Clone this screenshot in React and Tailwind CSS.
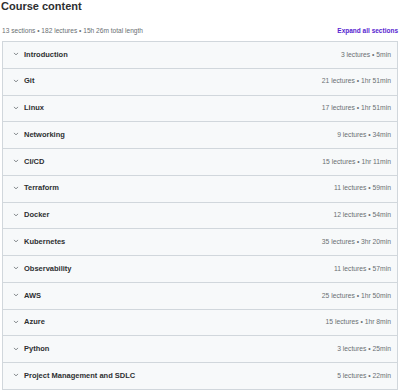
import React from 'react';

const sections = [
  { title: 'Introduction', lectures: 3, length: '5min' },
  { title: 'Git', lectures: 21, length: '1hr 51min' },
  { title: 'Linux', lectures: 17, length: '1hr 51min' },
  { title: 'Networking', lectures: 9, length: '34min' },
  { title: 'CI/CD', lectures: 15, length: '1hr 11min' },
  { title: 'Terraform', lectures: 11, length: '59min' },
  { title: 'Docker', lectures: 12, length: '54min' },
  { title: 'Kubernetes', lectures: 35, length: '3hr 20min' },
  { title: 'Observability', lectures: 11, length: '57min' },
  { title: 'AWS', lectures: 25, length: '1hr 50min' },
  { title: 'Azure', lectures: 15, length: '1hr 8min' },
  { title: 'Python', lectures: 3, length: '25min' },
  { title: 'Project Management and SDLC', lectures: 5, length: '22min' },
];

function Chevron() {
  return (
    <svg width="6" height="4" viewBox="0 0 6 4" className="shrink-0">
      <polyline points="1.2,1.2 3,2.8 4.8,1.2" fill="none" stroke="#7c8185" strokeWidth="0.9" strokeLinecap="round" strokeLinejoin="round" />
    </svg>
  );
}

export default function App() {
  return (
    <div className="w-[400px] h-[391px] bg-white overflow-hidden font-['Liberation_Sans',Arial,sans-serif] text-[#2d2f31]">
      <h2 className="pl-[1px] text-[11px] leading-[13px] font-bold">Course content</h2>

      <div className="mt-[14.3px] h-[8px] pl-[2px] pr-[2px] flex items-center justify-between">
        <span className="text-[6.6px] leading-[8px] text-[#6a6f73]">
          13 sections • 182 lectures • 15h 26m total length
        </span>
        <button className="text-[6.5px] leading-[8px] font-bold text-[#5624d0]">Expand all sections</button>
      </div>

      <div className="mt-[5.7px] ml-[2px] w-[396px] border border-[#d1d7dc]">
        {sections.map((s, i) => (
          <div
            key={s.title}
            className={
              i === 0
                ? 'h-[25.77px] bg-[#f7f9fa] flex items-center justify-between pl-[9.5px] pr-[6px] pb-[1.5px]'
                : 'h-[26.77px] border-t border-[#d1d7dc] bg-[#f7f9fa] flex items-center justify-between pl-[9.5px] pr-[6px] pb-[1.5px]'
            }
          >
            <div className="flex items-center gap-[5.5px]">
              <Chevron />
              <span className="text-[7.5px] font-bold leading-[9px]">{s.title}</span>
            </div>
            <span className="text-[6.75px] leading-[9px] text-[#6a6f73]">
              {s.lectures} lectures • {s.length}
            </span>
          </div>
        ))}
      </div>
    </div>
  );
}
